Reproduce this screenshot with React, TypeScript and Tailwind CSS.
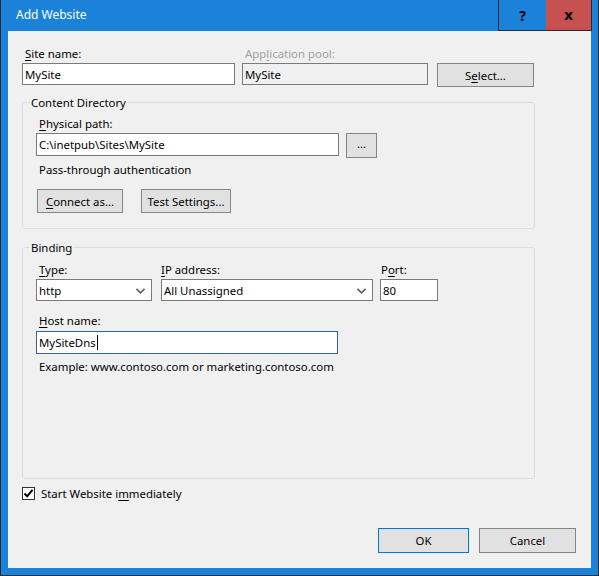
import React from "react";

const U = ({ children }: { children: React.ReactNode }) => (
  <span className="underline underline-offset-[2px] decoration-1">{children}</span>
);

const Label = ({ children, className = "" }: { children: React.ReactNode; className?: string }) => (
  <div className={`h-[15px] leading-[15px] whitespace-nowrap ${className}`}>{children}</div>
);

const TextBox = ({
  value,
  className = "",
  children,
}: {
  value: string;
  className?: string;
  children?: React.ReactNode;
}) => (
  <div className={`flex items-center border pl-[2px] leading-[15px] whitespace-nowrap ${className}`}>
    {value}
    {children}
  </div>
);

const Button = ({ children, className = "" }: { children: React.ReactNode; className?: string }) => (
  <div
    className={`flex items-center justify-center border bg-[#e1e1e1] leading-[15px] whitespace-nowrap ${className}`}
  >
    {children}
  </div>
);

const Chevron = () => (
  <svg width="9" height="6" viewBox="0 0 9 6" className="mr-[6px] mt-[1px]">
    <polyline points="0.5,0.8 4.5,4.8 8.5,0.8" fill="none" stroke="#606060" strokeWidth="1.6" />
  </svg>
);

const Select = ({ value, className = "" }: { value: string; className?: string }) => (
  <div
    className={`flex items-center justify-between border border-[#7a7a7a] bg-white pl-[2px] h-[22px] leading-[15px] ${className}`}
  >
    <span>{value}</span>
    <Chevron />
  </div>
);

const GroupBox = ({
  title,
  className = "",
  children,
}: {
  title: string;
  className?: string;
  children: React.ReactNode;
}) => (
  <fieldset className={`w-[513px] border border-[#dadfe4] rounded-[3px] pl-[13px] ${className}`}>
    <legend className="-ml-[6px] px-[1px] leading-[15px]">{title}</legend>
    {children}
  </fieldset>
);

export default function App() {
  return (
    <div
      className="w-[599px] h-[576px] bg-[#1a82d8] border-x border-b border-[#2b2b2b] flex flex-col text-[11.4px] text-black"
      style={{ fontFamily: '"Noto Sans", "Open Sans", sans-serif' }}
    >
      {/* Title bar */}
      <div className="h-[31px] flex items-start shrink-0">
        <div className="pl-[15px] pt-[7px] text-white text-[12px] leading-[15px]">Add Website</div>
        <div className="ml-auto mr-[6px] flex h-[31px]">
          <div className="w-[48px] h-[31px] border-l border-b border-[#2b2b2b] flex items-center justify-center font-bold text-[14px]">
            ?
          </div>
          <div className="w-[46px] h-[31px] bg-[#c75050] border-r border-b border-[#2b2b2b] flex items-center justify-center font-bold text-[15px] pb-[2px]">
            x
          </div>
        </div>
      </div>

      {/* Client area */}
      <div className="mx-[7px] mb-[7px] flex-1 bg-[#f0f0f0] pl-[14px] pr-[15px] pt-[15px] flex flex-col">
        {/* Site name row */}
        <div className="flex items-start">
          <div className="w-[213px]">
            <Label className="pl-[3px]">
              <U>S</U>ite name:
            </Label>
            <TextBox value="MySite" className="mt-[2px] h-[22px] bg-white border-[#7a7a7a]" />
          </div>
          <div className="w-[186px] ml-[7px]">
            <Label className="pl-[3px] text-[#a0a0a0]">
              App<U>l</U>ication pool:
            </Label>
            <TextBox value="MySite" className="mt-[2px] h-[22px] bg-[#f0f0f0] border-[#7a7a7a]" />
          </div>
          <Button className="ml-[9px] mt-[17px] w-[97px] h-[24px] border-[#858585]">
            S<U>e</U>lect...
          </Button>
        </div>

        {/* Content Directory */}
        <GroupBox title="Content Directory" className="mt-[8px] pb-[15px]">
          <Label className="mt-[6px] pl-[3px]">
            <U>P</U>hysical path:
          </Label>
          <div className="mt-[2px] flex items-start">
            <TextBox value="C:\inetpub\Sites\MySite" className="w-[303px] h-[23px] bg-white border-[#7a7a7a]" />
            <Button className="ml-[7px] w-[31px] h-[25px] border-[#858585] pb-[4px]">...</Button>
          </div>
          <Label className="mt-[4px] pl-[3px]">Pass-through authentication</Label>
          <div className="mt-[12px] flex">
            <Button className="ml-[1px] w-[86px] h-[24px] border-[#858585]">
              <U>C</U>onnect as...
            </Button>
            <Button className="ml-[18px] w-[90px] h-[24px] border-[#858585]">Test Settings...</Button>
          </div>
        </GroupBox>

        {/* Binding */}
        <GroupBox title="Binding" className="mt-[11px] pb-[104px]">
          <div className="mt-[7px] flex items-start">
            <div className="w-[116px]">
              <Label className="pl-[3px]">
                <U>T</U>ype:
              </Label>
              <Select value="http" className="mt-[2px]" />
            </div>
            <div className="w-[212px] ml-[9px]">
              <Label>
                <U>I</U>P address:
              </Label>
              <Select value="All Unassigned" className="mt-[2px]" />
            </div>
            <div className="w-[58px] ml-[7px]">
              <Label className="pl-[1px]">
                P<U>o</U>rt:
              </Label>
              <TextBox value="80" className="mt-[2px] h-[22px] bg-white border-[#7a7a7a]" />
            </div>
          </div>
          <Label className="mt-[12px] pl-[3px]">
            <U>H</U>ost name:
          </Label>
          <TextBox value="MySiteDns" className="mt-[3px] w-[302px] h-[23px] bg-white border-[#2f679c]">
            <span className="ml-[1px] w-[1px] h-[15px] bg-black" />
          </TextBox>
          <Label className="mt-[5px] pl-[3px]">Example: www.contoso.com or marketing.contoso.com</Label>
        </GroupBox>

        {/* Start immediately */}
        <div className="mt-[7px] flex items-center h-[15px]">
          <div className="w-[13px] h-[13px] border border-[#333333] bg-white flex items-center justify-center">
            <svg width="11" height="11" viewBox="0 0 11 11">
              <polyline points="1.5,5.5 4.2,8.3 9.5,1.8" fill="none" stroke="#000" strokeWidth="2" />
            </svg>
          </div>
          <span className="ml-[6px] leading-[15px]">
            Start Website i<U>m</U>mediately
          </span>
        </div>

        {/* Dialog buttons */}
        <div className="mt-[27px] flex justify-end">
          <Button className="w-[91px] h-[25px] border-[#0078d7]">OK</Button>
          <Button className="ml-[10px] w-[97px] h-[25px] border-[#858585]">Cancel</Button>
        </div>
      </div>
    </div>
  );
}
